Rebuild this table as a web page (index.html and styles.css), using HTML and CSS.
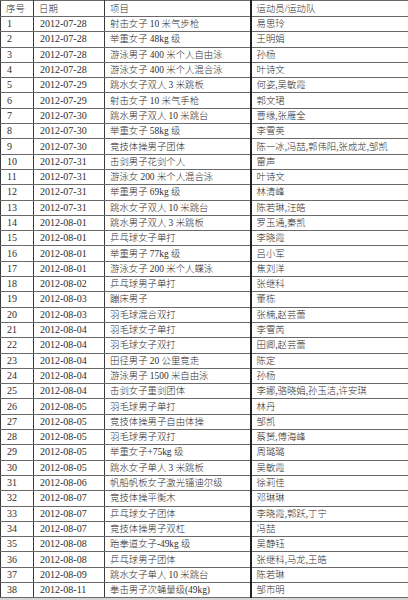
FILE: index.html
```html
<!DOCTYPE html>
<html lang="zh">
<head>
<meta charset="utf-8">
<link rel="stylesheet" href="styles.css">
</head>
<body>
<table class="medals">
<colgroup><col class="c-no"><col class="c-date"><col class="c-event"><col class="c-ath"></colgroup>
<thead>
<tr class="head"><th>序号</th><th>日期</th><th>项目</th><th class="ath">运动员/运动队</th></tr>
</thead>
<tbody>
<tr><td class="num">1</td><td class="num">2012-07-28</td><td>射击女子 10 米气步枪</td><td class="ath">易思玲</td></tr>
<tr><td class="num">2</td><td class="num">2012-07-28</td><td>举重女子 48kg 级</td><td class="ath">王明娟</td></tr>
<tr><td class="num">3</td><td class="num">2012-07-28</td><td>游泳男子 400 米个人自由泳</td><td class="ath">孙杨</td></tr>
<tr><td class="num">4</td><td class="num">2012-07-28</td><td>游泳女子 400 米个人混合泳</td><td class="ath">叶诗文</td></tr>
<tr><td class="num">5</td><td class="num">2012-07-29</td><td>跳水女子双人 3 米跳板</td><td class="ath">何姿,吴敏霞</td></tr>
<tr><td class="num">6</td><td class="num">2012-07-29</td><td>射击女子 10 米气手枪</td><td class="ath">郭文珺</td></tr>
<tr><td class="num">7</td><td class="num">2012-07-30</td><td>跳水男子双人 10 米跳台</td><td class="ath">曹缘,张雁全</td></tr>
<tr><td class="num">8</td><td class="num">2012-07-30</td><td>举重女子 58kg 级</td><td class="ath">李雪英</td></tr>
<tr><td class="num">9</td><td class="num">2012-07-30</td><td>竞技体操男子团体</td><td class="ath">陈一冰,冯喆,郭伟阳,张成龙,邹凯</td></tr>
<tr><td class="num">10</td><td class="num">2012-07-31</td><td>击剑男子花剑个人</td><td class="ath">雷声</td></tr>
<tr><td class="num">11</td><td class="num">2012-07-31</td><td>游泳女 200 米个人混合泳</td><td class="ath">叶诗文</td></tr>
<tr><td class="num">12</td><td class="num">2012-07-31</td><td>举重男子 69kg 级</td><td class="ath">林清峰</td></tr>
<tr><td class="num">13</td><td class="num">2012-07-31</td><td>跳水女子双人 10 米跳台</td><td class="ath">陈若琳,汪皓</td></tr>
<tr><td class="num">14</td><td class="num">2012-08-01</td><td>跳水男子双人 3 米跳板</td><td class="ath">罗玉通,秦凯</td></tr>
<tr><td class="num">15</td><td class="num">2012-08-01</td><td>乒乓球女子单打</td><td class="ath">李晓霞</td></tr>
<tr><td class="num">16</td><td class="num">2012-08-01</td><td>举重男子 77kg 级</td><td class="ath">吕小军</td></tr>
<tr><td class="num">17</td><td class="num">2012-08-01</td><td>游泳女子 200 米个人蝶泳</td><td class="ath">焦刘洋</td></tr>
<tr><td class="num">18</td><td class="num">2012-08-02</td><td>乒乓球男子单打</td><td class="ath">张继科</td></tr>
<tr><td class="num">19</td><td class="num">2012-08-03</td><td>蹦床男子</td><td class="ath">董栋</td></tr>
<tr><td class="num">20</td><td class="num">2012-08-03</td><td>羽毛球混合双打</td><td class="ath">张楠,赵芸蕾</td></tr>
<tr><td class="num">21</td><td class="num">2012-08-04</td><td>羽毛球女子单打</td><td class="ath">李雪芮</td></tr>
<tr><td class="num">22</td><td class="num">2012-08-04</td><td>羽毛球女子双打</td><td class="ath">田卿,赵芸蕾</td></tr>
<tr><td class="num">23</td><td class="num">2012-08-04</td><td>田径男子 20 公里竞走</td><td class="ath">陈定</td></tr>
<tr><td class="num">24</td><td class="num">2012-08-04</td><td>游泳男子 1500 米自由泳</td><td class="ath">孙杨</td></tr>
<tr><td class="num">25</td><td class="num">2012-08-04</td><td>击剑女子重剑团体</td><td class="ath">李娜,骆晓娟,孙玉洁,许安琪</td></tr>
<tr><td class="num">26</td><td class="num">2012-08-05</td><td>羽毛球男子单打</td><td class="ath">林丹</td></tr>
<tr><td class="num">27</td><td class="num">2012-08-05</td><td>竞技体操男子自由体操</td><td class="ath">邹凯</td></tr>
<tr><td class="num">28</td><td class="num">2012-08-05</td><td>羽毛球男子双打</td><td class="ath">蔡赟,傅海峰</td></tr>
<tr><td class="num">29</td><td class="num">2012-08-05</td><td>举重女子+75kg 级</td><td class="ath">周璐璐</td></tr>
<tr><td class="num">30</td><td class="num">2012-08-05</td><td>跳水女子单人 3 米跳板</td><td class="ath">吴敏霞</td></tr>
<tr><td class="num">31</td><td class="num">2012-08-06</td><td>帆船帆板女子激光镭迪尔级</td><td class="ath">徐莉佳</td></tr>
<tr><td class="num">32</td><td class="num">2012-08-07</td><td>竞技体操平衡木</td><td class="ath">邓琳琳</td></tr>
<tr><td class="num">33</td><td class="num">2012-08-07</td><td>乒乓球女子团体</td><td class="ath">李晓霞,郭跃,丁宁</td></tr>
<tr><td class="num">34</td><td class="num">2012-08-07</td><td>竞技体操男子双杠</td><td class="ath">冯喆</td></tr>
<tr><td class="num">35</td><td class="num">2012-08-08</td><td>跆拳道女子-49kg 级</td><td class="ath">吴静钰</td></tr>
<tr><td class="num">36</td><td class="num">2012-08-08</td><td>乒乓球男子团体</td><td class="ath">张继科,马龙,王皓</td></tr>
<tr><td class="num">37</td><td class="num">2012-08-09</td><td>跳水女子单人 10 米跳台</td><td class="ath">陈若琳</td></tr>
<tr><td class="num">38</td><td class="num">2012-08-11</td><td>拳击男子次蝇量级(49kg)</td><td class="ath">邹市明</td></tr>
</tbody>
</table>
</body>
</html>
```

FILE: styles.css
```css
html, body {
  margin: 0;
  padding: 0;
  background: #d6d6d6;
}
body {
  font-family: "Liberation Serif", "Noto Sans CJK SC", serif;
  color: #2e2e2e;
}
.medals {
  width: 409px;
  border-collapse: collapse;
  table-layout: fixed;
  background: #fff;
  border: 1px solid #333;
}
.c-no { width: 33px; }
.c-date { width: 71px; }
.c-event { width: 146px; }
.c-ath { width: 159px; }
.medals th,
.medals td {
  border-top: 1px solid #6a6a6a;
  border-bottom: 1px solid #6a6a6a;
  border-left: 1px solid #3a3a3a;
  border-right: 1px solid #3a3a3a;
  padding: 0 0 0 5px;
  text-align: left;
  font-weight: 300;
  font-size: 9.4px;
  line-height: 12px;
  white-space: nowrap;
  overflow: hidden;
  vertical-align: middle;
}
.medals td.num {
  font-size: 10px;
  font-weight: normal;
  padding-left: 6px;
}
.medals .ath {
  border-left: 2px solid #222;
  padding-left: 5px;
}
.head th {
  height: 15px;
}
.medals tbody td {
  height: 14.3px;
}
```
